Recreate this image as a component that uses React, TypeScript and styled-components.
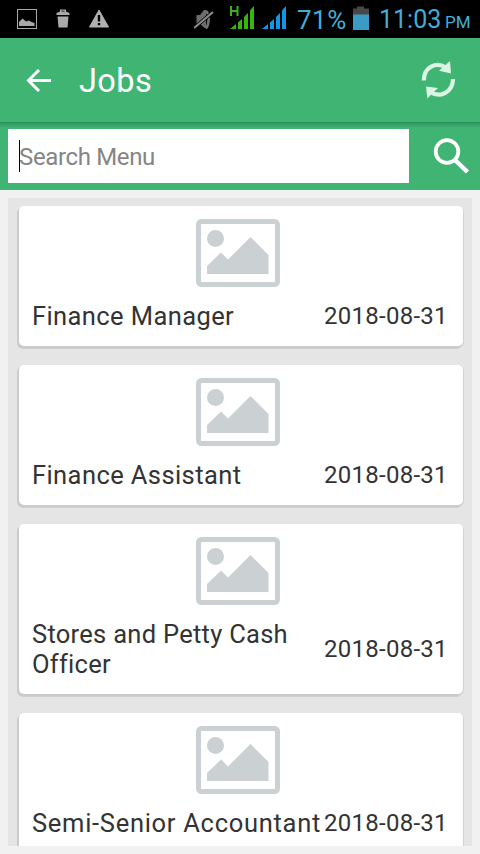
import React from "react";
import styled, { createGlobalStyle } from "styled-components";

const GlobalStyle = createGlobalStyle`
  * { box-sizing: border-box; }
  html, body { margin: 0; padding: 0; overflow: hidden; background: #f1f1f1; }
  body { font-family: Roboto, "Noto Sans", sans-serif; color: #333; }
`;

const Screen = styled.div`
  width: 480px;
  height: 854px;
  display: flex;
  flex-direction: column;
  overflow: hidden;
  background: #f1f1f1;
`;

const StatusBar = styled.div`
  flex: none;
  height: 38px;
  display: flex;
  align-items: flex-start;
  background: #000;
  color: #45acd6;
`;

const StatusIcon = styled.svg<{ $left: number }>`
  flex: none;
  display: block;
  margin-left: ${(p) => p.$left}px;
`;

const StatusText = styled.span<{ $size: number; $left: number; $width: number; $spacing: number }>`
  flex: none;
  width: ${(p) => p.$width}px;
  margin-left: ${(p) => p.$left}px;
  font-size: ${(p) => p.$size}px;
  font-weight: 400;
  letter-spacing: ${(p) => p.$spacing}px;
  line-height: 40px;
  white-space: nowrap;
`;

const Meridiem = styled(StatusText)`
  line-height: 45px;
`;

const AppBar = styled.header`
  flex: none;
  height: 84px;
  display: flex;
  align-items: center;
  padding: 0 24px 0 25px;
  background: #3fb473;
  color: #fff;
`;

const Title = styled.h1`
  flex: 1;
  margin: 0 0 0 27px;
  padding-top: 2px;
  font-size: 32.5px;
  font-weight: 400;
  letter-spacing: 0.4px;
  line-height: 82px;
`;

const SearchBar = styled.div`
  flex: none;
  height: 68px;
  display: flex;
  align-items: flex-start;
  padding: 7px 10px 0 8px;
  background: linear-gradient(#2c8f58 0, #2f965d 1px, #38a568 3px, #3fb473 6px);
`;

const SearchField = styled.div`
  flex: none;
  width: 401px;
  height: 54px;
  display: flex;
  align-items: center;
  padding-left: 11px;
  background: #fff;
  color: #858585;
`;

const Caret = styled.span`
  width: 1px;
  height: 32px;
  margin-right: -1px;
  background: #000;
`;

const SearchHint = styled.span`
  padding-top: 2px;
  font-size: 24px;
  letter-spacing: -0.35px;
  line-height: 30px;
`;

const SearchIcon = styled.svg`
  flex: none;
  margin: 7px 0 0 22px;
`;

const List = styled.main`
  flex: none;
  height: 648px;
  margin: 8px 8px 0;
  padding: 8px 9px 0 11px;
  display: flex;
  flex-direction: column;
  gap: 19px;
  overflow: hidden;
  background: #e5e5e5;
`;

const Card = styled.article`
  flex: none;
  display: flex;
  flex-direction: column;
  align-items: center;
  padding: 13px 16px 15px 13px;
  border-radius: 5px;
  background: #fff;
  box-shadow: -2px 2px 0 0 #cbcbcb, -1px 3px 0 0 #cfcfcf, 1px 1px 0 0 #d2d2d2;
`;

const CardRow = styled.div`
  width: 100%;
  margin-top: 14px;
  display: flex;
  align-items: center;
`;

const JobTitle = styled.div<{ $spacing: number }>`
  flex: 1;
  min-width: 0;
  white-space: pre-line;
  font-size: 25.5px;
  letter-spacing: ${(p) => p.$spacing}px;
  line-height: 30px;
`;

const JobDate = styled.time`
  flex: none;
  width: 123px;
  font-size: 24px;
  letter-spacing: 0.27px;
  line-height: 30px;
  white-space: nowrap;
`;

const PlaceholderIcon = styled.svg`
  display: block;
  margin-right: 4px;
`;

const Placeholder = () => (
  <PlaceholderIcon width="84" height="68" viewBox="0 0 84 68" fill="#cbd1d2">
    <rect x="2.5" y="2.5" width="79" height="63" rx="3" fill="none" stroke="#cbd1d2" strokeWidth="5" />
    <circle cx="19.500" cy="19.500" r="8.500" />
    <path d="M11 55V47L25 33.500L32 40.500L54.500 18L72.500 36V55Z" />
  </PlaceholderIcon>
);

const jobs = [
  { title: "Finance Manager", date: "2018-08-31", spacing: 0.4 },
  { title: "Finance Assistant", date: "2018-08-31", spacing: 0.41 },
  { title: "Stores and Petty Cash\nOfficer", date: "2018-08-31", spacing: 0.28 },
  { title: "Semi-Senior Accountant", date: "2018-08-31", spacing: 0.71 },
];

const Bars = ({ fill, left }: { fill: string; left: number }) => (
  <StatusIcon $left={left} width="25" height="38" viewBox="0 0 25 38" fill={fill}>
    <path d="M0 29L6 24V29ZM8 29V22.500L12 19V29ZM14 29V17L18 13V29ZM20 29V10.500L24 6V29Z" />
  </StatusIcon>
);

export default function App() {
  return (
    <>
      <GlobalStyle />
      <Screen>
        <StatusBar>
          <StatusIcon $left={17} width="20" height="38" viewBox="0 0 20 38">
            <rect x="0.5" y="9.5" width="19" height="19" fill="none" stroke="#a9a9a9" />
            <path d="M2 26V22L5.500 18.500L9 21.500L12 20.500L14.500 22L17.500 23V26Z" fill="#a9a9a9" />
          </StatusIcon>
          <StatusIcon $left={19} width="14" height="38" viewBox="0 0 14 38" fill="#a9a9a9">
            <path d="M4 11.500V9.500H10V11.500L13.500 13V15H0.500V13ZM5.500 10.700V11.500H8.500V10.700Z" fillRule="evenodd" />
            <path d="M1.500 16.500H12.500L11.500 27.500H2.500Z" />
          </StatusIcon>
          <StatusIcon $left={19} width="20" height="38" viewBox="0 0 20 38">
            <path d="M10 10L19.500 27H0.500Z" fill="#b0b0b0" stroke="#b0b0b0" strokeLinejoin="round" />
            <path d="M8.800 15H11.200V21.500H8.800ZM8.800 23H11.200V25.300H8.800Z" fill="#000" />
          </StatusIcon>
          <StatusIcon $left={85} width="22" height="38" viewBox="0 0 22 38">
            <path d="M2.500 15H6L10 10H12V28H10.500L6 24H2.500Z" fill="#6c6c6c" />
            <path d="M12 11C15.500 14 15.500 24 12 28.500" fill="none" stroke="#777" strokeWidth="2.500" />
            <path d="M0 28L19 12" stroke="#000" strokeWidth="3.500" />
            <path d="M0 28L19 12" stroke="#909090" strokeWidth="2" />
          </StatusIcon>
          <StatusIcon $left={14} width="9" height="38" viewBox="0 0 9 38">
            <path d="M1 6V16M7.500 6V16M1 11H7.500" stroke="#3fae20" strokeWidth="2" fill="none" />
          </StatusIcon>
          <Bars left={-9} fill="#35b80c" />
          <Bars left={7} fill="#1296e8" />
          <StatusText $size={26} $left={10} $width={48} $spacing={0.5}>71%</StatusText>
          <StatusIcon $left={8} width="16" height="38" viewBox="0 0 16 38">
            <path d="M0 8.500H4V6.500H11V8.500H16V15H0Z" fill="#484848" />
            <path d="M0 14.500H16V30H0Z" fill="#3a9cc4" />
          </StatusIcon>
          <StatusText $size={25} $left={10} $width={62} $spacing={0}>11:03</StatusText>
          <Meridiem $size={17} $left={4} $width={25} $spacing={0.1}>PM</Meridiem>
        </StatusBar>

        <AppBar>
          <svg width="27" height="24" viewBox="0 0 27 24" fill="none" stroke="#fff" strokeWidth="3">
            <path d="M26 12.500H3M14 2L3.500 12.500L14 23" />
          </svg>
          <Title>Jobs</Title>
          <svg width="36" height="38" viewBox="0 0 36 38">
            <path d="M3.800 19.500C3.800 6 16 0.500 26 6.500M33 18C33 31 20 37.500 10.500 31" fill="none" stroke="#daf5e4" strokeWidth="4.200" />
            <path d="M30 0L31 12.500L19 9.800ZM6 25.500L18 27L7.300 37.500Z" fill="#daf5e4" />
          </svg>
        </AppBar>

        <SearchBar>
          <SearchField>
            <Caret />
            <SearchHint>Search Menu</SearchHint>
          </SearchField>
          <SearchIcon width="40" height="40" viewBox="0 0 40 40" fill="none" stroke="#fff">
            <circle cx="16" cy="15.500" r="11.300" strokeWidth="3.800" />
            <path d="M24.500 24.500L36.500 36" strokeWidth="4.500" />
          </SearchIcon>
        </SearchBar>

        <List>
          {jobs.map((job) => (
            <Card key={job.title}>
              <Placeholder />
              <CardRow>
                <JobTitle $spacing={job.spacing}>{job.title}</JobTitle>
                <JobDate>{job.date}</JobDate>
              </CardRow>
            </Card>
          ))}
        </List>
      </Screen>
    </>
  );
}
